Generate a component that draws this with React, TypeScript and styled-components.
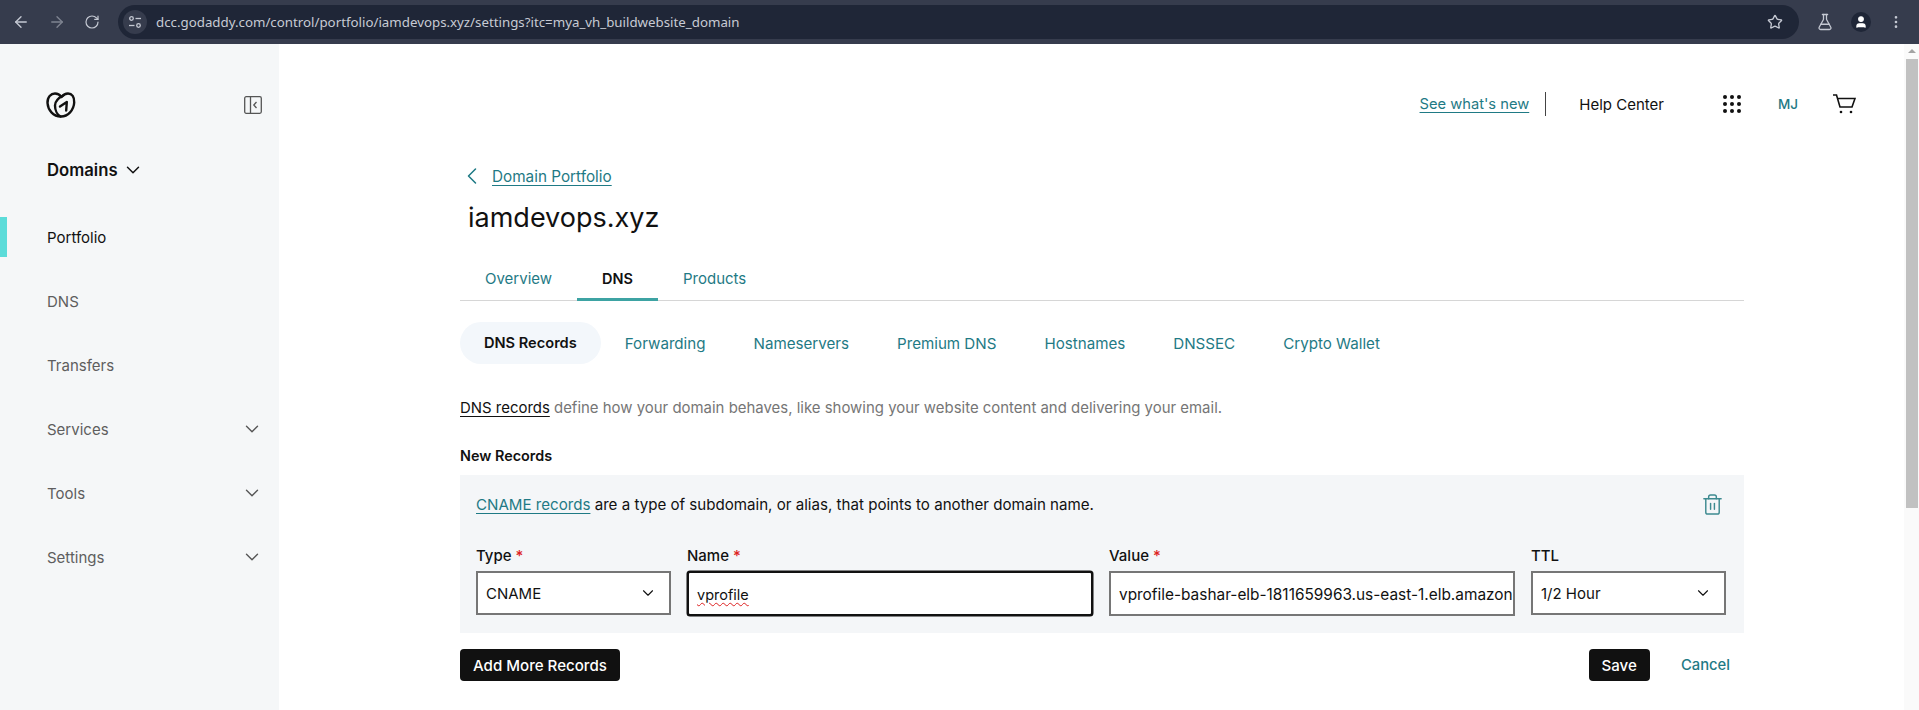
import React, { FunctionComponent } from 'react';
import styled, { createGlobalStyle } from 'styled-components';
import {
  ArrowLeft,
  ArrowRight,
  ChevronDown,
  ChevronLeft,
  EllipsisVertical,
  FlaskConical,
  RotateCw,
  Star,
  Trash2,
  User,
} from 'lucide-react';

const TEAL = '#1f7a85';
const FONT = 'Inter, "Noto Sans", sans-serif';

const GlobalStyle = createGlobalStyle`
  html, body {
    margin: 0;
    height: 100%;
    overflow: hidden;
    background: #fff;
    font-family: ${FONT};
    color: #111;
  }
  #root { height: 100%; }
  * { box-sizing: border-box; }
`;

const Page = styled.div`
  display: flex;
  flex-direction: column;
  width: 1919px;
  height: 710px;
  overflow: hidden;
`;

/* browser chrome */
const BrowserBar = styled.div`
  flex: none;
  display: flex;
  align-items: center;
  height: 44px;
  padding: 0 0 0 12px;
  background: #363c4d;
  color: #c5c9d3;
`;

const NavIcons = styled.div`
  display: flex;
  align-items: center;
  gap: 18px;
  width: 106px;
`;

const NavIcon = styled.span<{ $dim?: boolean }>`
  display: flex;
  color: ${({ $dim }) => ($dim ? '#7f8491' : '#c5c9d3')};
`;

const Omnibox = styled.div`
  display: flex;
  align-items: center;
  width: 1681px;
  height: 34px;
  padding: 0 16px 0 5px;
  border-radius: 17px;
  background: #1f2637;
`;

const TuneBadge = styled.span`
  display: flex;
  align-items: center;
  justify-content: center;
  width: 24px;
  height: 24px;
  margin-right: 9px;
  border-radius: 50%;
  background: #363c4d;
`;

const UrlText = styled.span`
  flex: 1;
  font-family: "Noto Sans", sans-serif;
  font-size: 13.3px;
  color: #c7cbd4;
`;

const BrowserActions = styled.div`
  display: flex;
  align-items: center;
  gap: 17px;
  padding-left: 17px;
`;

const Avatar = styled.span`
  display: flex;
  align-items: center;
  justify-content: center;
  width: 20px;
  height: 20px;
  border-radius: 50%;
  background: #1f2637;
  color: #fff;
`;

const Body = styled.div`
  flex: 1;
  display: flex;
  min-height: 0;
`;

/* left nav */
const Sidebar = styled.aside`
  flex: none;
  width: 279px;
  background: #f5f7f8;
  display: flex;
  flex-direction: column;
`;

const SideTop = styled.div`
  display: flex;
  align-items: center;
  justify-content: space-between;
  height: 40px;
  margin-top: 41px;
  padding: 0 17px 0 46px;
`;

const DomainsRow = styled.div`
  display: flex;
  align-items: center;
  gap: 4px;
  height: 24px;
  margin-top: 33px;
  margin-bottom: 23px;
  padding-left: 47px;
  font-size: 16.7px;
  font-weight: 600;
  color: #111;
`;

const NavList = styled.div`
  display: flex;
  flex-direction: column;
`;

const NavItem = styled.div<{ $active?: boolean }>`
  position: relative;
  display: flex;
  align-items: center;
  justify-content: space-between;
  height: 64px;
  padding: 0 16px 0 47px;
  font-size: 15px;
  color: ${({ $active }) => ($active ? '#111' : '#5e5e5e')};
  &::before {
    content: '';
    display: ${({ $active }) => ($active ? 'block' : 'none')};
    position: absolute;
    left: 0;
    top: 12px;
    width: 7px;
    height: 40px;
    background: #5cdcd9;
  }
`;

/* main column */
const Main = styled.main`
  flex: 1;
  min-width: 0;
  display: flex;
  flex-direction: column;
  padding: 0 0 0 181px;
`;

const TopLinks = styled.div`
  display: flex;
  align-items: center;
  justify-content: flex-end;
  height: 24px;
  margin-top: 48px;
  padding-right: 48px;
  font-size: 14.7px;
`;

const TealLink = styled.a`
  color: ${TEAL};
  text-decoration: underline;
  text-underline-offset: 3px;
`;

const Divider = styled.span`
  width: 1px;
  height: 24px;
  margin: 0 33px 0 16px;
  background: #444;
`;

const HelpText = styled.span`
  color: #111;
  font-size: 15px;
  margin-right: 59px;
`;

const Initials = styled.span`
  margin: 0 34px 0 37px;
  font-size: 13.5px;
  font-weight: 500;
  color: ${TEAL};
`;

const BackRow = styled.div`
  display: flex;
  align-items: center;
  gap: 6px;
  height: 24px;
  margin-top: 48px;
  margin-left: -2px;
  font-size: 15.3px;
  color: ${TEAL};
  svg { flex: none; }
`;

const Title = styled.h1`
  margin: 9px 0 0 8px;
  height: 42px;
  font-size: 27px;
  line-height: 42px;
  font-weight: 400;
  color: #111;
`;

const Tabs = styled.div`
  display: flex;
  width: 1284px;
  height: 46px;
  margin-top: 16px;
  border-bottom: 1px solid #d6d6d6;
`;

const Tab = styled.div<{ $active?: boolean }>`
  display: flex;
  align-items: center;
  justify-content: center;
  height: 46px;
  padding: 3px 25px 0;
  font-size: ${({ $active }) => ($active ? '14.5px' : '15px')};
  font-weight: ${({ $active }) => ($active ? 600 : 400)};
  color: ${({ $active }) => ($active ? '#111' : TEAL)};
  border-bottom: 3px solid ${({ $active }) => ($active ? '#3da3a3' : 'transparent')};
`;

const SubTabs = styled.div`
  display: flex;
  margin-top: 21px;
`;

const SubTab = styled.div<{ $active?: boolean }>`
  display: flex;
  align-items: center;
  height: 42px;
  padding: 0 24px;
  border-radius: 21px;
  font-size: ${({ $active }) => ($active ? '14.6px' : '15.15px')};
  font-weight: ${({ $active }) => ($active ? 600 : 400)};
  color: ${({ $active }) => ($active ? '#111' : TEAL)};
  background: ${({ $active }) => ($active ? '#f3f7fb' : 'transparent')};
`;

const Intro = styled.p`
  margin: 33px 0 0;
  font-size: 14.95px;
  line-height: 22px;
  color: #767676;
  a { color: #111; text-decoration: underline; text-underline-offset: 3px; }
`;

const SectionLabel = styled.div`
  margin-top: 26px;
  font-size: 14.4px;
  line-height: 22px;
  font-weight: 600;
  color: #111;
`;

const RecordPanel = styled.section`
  width: 1284px;
  height: 158px;
  margin-top: 8px;
  padding: 18px 17px 0 16px;
  background: #f4f6f8;
`;

const PanelHead = styled.div`
  display: flex;
  justify-content: space-between;
  align-items: center;
  height: 22px;
  padding-right: 3px;
  font-size: 15.12px;
  color: #111;
`;

const FieldRow = styled.div`
  display: grid;
  grid-template-columns: 195px 406px 406px 195px;
  column-gap: 16px;
  margin-top: 30px;
`;

const Field = styled.div`
  display: flex;
  flex-direction: column;
`;

const FieldLabel = styled.label`
  height: 26px;
  font-size: 15px;
  line-height: 22px;
  font-weight: 500;
  color: #111;
  i { color: #d22; font-style: normal; }
`;

const SelectBox = styled.div`
  display: flex;
  align-items: center;
  justify-content: space-between;
  height: 44px;
  padding: 0 12px 0 8px;
  background: #fff;
  border: 2px solid #767676;
  font-size: 15px;
  color: #111;
`;

const InputBox = styled.div<{ $focused?: boolean }>`
  display: flex;
  align-items: center;
  height: 45px;
  padding: 2px 8px 0;
  background: #fff;
  border: 2px solid ${({ $focused }) => ($focused ? '#111' : '#767676')};
  border-radius: ${({ $focused }) => ($focused ? '3px' : '0')};
  box-shadow: ${({ $focused }) => ($focused ? '0 0 0 0.5px #111' : 'none')};
  font-size: ${({ $focused }) => ($focused ? '14.5px' : '15.4px')};
  color: #111;
  white-space: nowrap;
  overflow: hidden;
`;

const Misspelled = styled.span`
  text-decoration: underline wavy #d22 1px;
  text-underline-offset: 2px;
`;

const ActionRow = styled.div`
  display: flex;
  align-items: center;
  width: 1284px;
  margin-top: 16px;
`;

const BlackButton = styled.button`
  height: 32px;
  padding: 0 13px;
  border: 0;
  border-radius: 4px;
  background: #111;
  color: #fff;
  font-family: ${FONT};
  font-size: 15.1px;
  font-weight: 500;
`;

const Cancel = styled.span`
  margin: 0 14px 0 31px;
  font-size: 14.8px;
  font-weight: 500;
  color: ${TEAL};
`;

const Spacer = styled.span`
  flex: 1;
`;

/* scrollbar */
const ScrollTrack = styled.div`
  flex: none;
  display: flex;
  flex-direction: column;
  align-items: center;
  width: 15px;
  padding: 5px 1px 0 2px;
  background: #fafafa;
`;

const ScrollArrow = styled.span`
  width: 0;
  height: 0;
  border-left: 4px solid transparent;
  border-right: 4px solid transparent;
  border-bottom: 4px solid #a3a3a3;
`;

const ScrollThumb = styled.span`
  width: 100%;
  height: 449px;
  margin-top: 6px;
  background: #c1c1c1;
`;

const GoDaddyLogo = () => (
  <svg width="30" height="26" viewBox="0 0 30 26" fill="none" stroke="#111" strokeWidth="2.4" strokeLinecap="round" strokeLinejoin="round">
    <path d="M15 24.500C7 24.500 2 18 1.500 11 1.200 5 5 1.500 9 1.500c3 0 5 1.500 6.500 3.500C17.500 2.500 20 1.500 22 1.500c4 0 6.500 3.500 6.200 9C27.800 18 22 24.500 15 24.500Z" />
    <path d="M18 3C13 5.500 9 9 9 13.500c0 5 2.500 9.500 5.500 11" />
    <path d="M14 14.500 20.800 10l-.6 8.500" />
  </svg>
);

const CollapseIcon = () => (
  <svg width="18" height="18" viewBox="0 0 18 18" fill="none" stroke="#555" strokeWidth="1.3">
    <rect x="0.700" y="0.700" width="16.600" height="16.600" rx="1.500" />
    <path d="M6.500 1v16" />
    <path d="M12.500 6 9.800 9l2.700 3" />
  </svg>
);

const TuneIcon = () => (
  <svg width="14" height="14" viewBox="0 0 14 14" fill="none" stroke="#c5c9d3" strokeWidth="1.300">
    <circle cx="3.500" cy="3.500" r="1.800" />
    <path d="M7.500 3.500H13" />
    <circle cx="10.500" cy="10.500" r="1.800" />
    <path d="M1 10.500h5.500" />
  </svg>
);

const DotGrid = () => (
  <svg width="18" height="18" viewBox="0 0 18 18" fill="#111">
    {[2, 9, 16].flatMap((y) =>
      [2, 9, 16].map((x) => <circle key={`${x}-${y}`} cx={x} cy={y} r="2" />),
    )}
  </svg>
);

const CartIcon = () => (
  <svg width="24" height="20" viewBox="0 0 24 20" fill="none" stroke="#111" strokeWidth="1.600">
    <path d="M1 1h3.500l3.500 12h12L23 4.500H5.500" />
    <circle cx="9" cy="18" r="1.300" fill="#111" stroke="none" />
    <circle cx="19" cy="18" r="1.300" fill="#111" stroke="none" />
  </svg>
);

const sideItems = [
  { label: 'Portfolio', active: true },
  { label: 'DNS' },
  { label: 'Transfers' },
  { label: 'Services', more: true },
  { label: 'Tools', more: true },
  { label: 'Settings', more: true },
];

const subTabs = ['DNS Records', 'Forwarding', 'Nameservers', 'Premium DNS', 'Hostnames', 'DNSSEC', 'Crypto Wallet'];

const App: FunctionComponent = () => {
  return (
    <Page>
      <GlobalStyle />
      <BrowserBar>
        <NavIcons>
          <NavIcon><ArrowLeft size={18} strokeWidth={1.800} /></NavIcon>
          <NavIcon $dim><ArrowRight size={18} strokeWidth={1.800} /></NavIcon>
          <NavIcon><RotateCw size={16} strokeWidth={1.800} /></NavIcon>
        </NavIcons>
        <Omnibox>
          <TuneBadge><TuneIcon /></TuneBadge>
          <UrlText>dcc.godaddy.com/control/portfolio/iamdevops.xyz/settings?itc=mya_vh_buildwebsite_domain</UrlText>
          <Star size={16} />
        </Omnibox>
        <BrowserActions>
          <FlaskConical size={18} strokeWidth={1.700} />
          <Avatar><User size={14} fill="#fff" /></Avatar>
          <EllipsisVertical size={16} />
        </BrowserActions>
      </BrowserBar>
      <Body>
        <Sidebar>
          <SideTop>
            <GoDaddyLogo />
            <CollapseIcon />
          </SideTop>
          <DomainsRow>Domains <ChevronDown size={22} strokeWidth={1.600} /></DomainsRow>
          <NavList>
            {sideItems.map(({ label, active, more }) => (
              <NavItem $active={active} key={label}>
                <span>{label}</span>
                {more && <ChevronDown size={22} strokeWidth={1.500} color="#555" />}
              </NavItem>
            ))}
          </NavList>
        </Sidebar>
        <Main>
          <TopLinks>
            <TealLink>See what's new</TealLink>
            <Divider />
            <HelpText>Help Center</HelpText>
            <DotGrid />
            <Initials>MJ</Initials>
            <CartIcon />
          </TopLinks>
          <BackRow>
            <ChevronLeft size={28} strokeWidth={1.300} />
            <TealLink>Domain Portfolio</TealLink>
          </BackRow>
          <Title>iamdevops.xyz</Title>
          <Tabs>
            <Tab>Overview</Tab>
            <Tab $active>DNS</Tab>
            <Tab>Products</Tab>
          </Tabs>
          <SubTabs>
            {subTabs.map((label, i) => (
              <SubTab $active={i === 0} key={label}>{label}</SubTab>
            ))}
          </SubTabs>
          <Intro>
            <a>DNS records</a> define how your domain behaves, like showing your website content and delivering your email.
          </Intro>
          <SectionLabel>New Records</SectionLabel>
          <RecordPanel>
            <PanelHead>
              <span><TealLink>CNAME records</TealLink> are a type of subdomain, or alias, that points to another domain name.</span>
              <Trash2 size={23} strokeWidth={1.500} color="#3d8a90" />
            </PanelHead>
            <FieldRow>
              <Field>
                <FieldLabel>Type <i>*</i></FieldLabel>
                <SelectBox>CNAME <ChevronDown size={18} strokeWidth={1.500} /></SelectBox>
              </Field>
              <Field>
                <FieldLabel>Name <i>*</i></FieldLabel>
                <InputBox $focused><Misspelled>vprofile</Misspelled></InputBox>
              </Field>
              <Field>
                <FieldLabel>Value <i>*</i></FieldLabel>
                <InputBox>vprofile-bashar-elb-1811659963.us-east-1.elb.amazon</InputBox>
              </Field>
              <Field>
                <FieldLabel>TTL</FieldLabel>
                <SelectBox>1/2 Hour <ChevronDown size={18} strokeWidth={1.500} /></SelectBox>
              </Field>
            </FieldRow>
          </RecordPanel>
          <ActionRow>
            <BlackButton>Add More Records</BlackButton>
            <Spacer />
            <BlackButton>Save</BlackButton>
            <Cancel>Cancel</Cancel>
          </ActionRow>
        </Main>
        <ScrollTrack>
          <ScrollArrow />
          <ScrollThumb />
        </ScrollTrack>
      </Body>
    </Page>
  );
};

export default App;
